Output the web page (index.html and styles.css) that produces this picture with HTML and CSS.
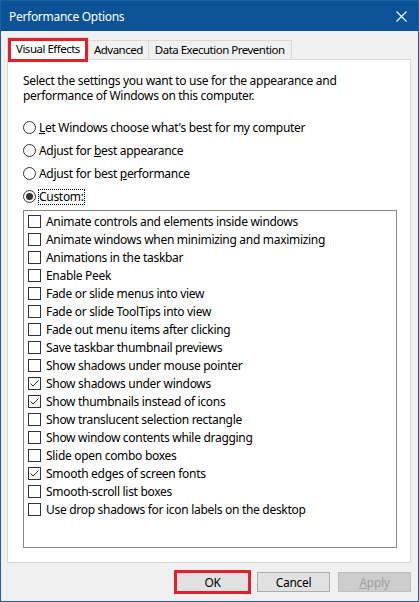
FILE: index.html
```html
<!DOCTYPE html>
<html lang="en">
<head>
    <meta charset="UTF-8">
    <meta name="viewport" content="width=device-width, initial-scale=1.0">
    <title>Performance Options</title>
    <link rel="stylesheet" href="styles.css">
</head>
<body>
    <div class="window">
        <div class="titlebar">
            <span class="title">Performance Options</span>
            <svg class="close" width="11" height="11" viewBox="0 0 11 11">
                <path d="M0.5 0.5 L10.5 10.5 M10.5 0.5 L0.5 10.5" stroke="#fff" stroke-width="1.1" fill="none"/>
            </svg>
        </div>

        <div class="content">
            <div class="tabs">
                <div class="tab active">Visual Effects</div>
                <div class="tab">Advanced</div>
                <div class="tab">Data Execution Prevention</div>
            </div>

            <div class="panel">
                <p class="intro">Select the settings you want to use for the appearance and<br>performance of Windows on this computer.</p>

                <div class="radios">
                    <div class="radio"><span class="dot"></span><span><u>L</u>et Windows choose what's best for my computer</span></div>
                    <div class="radio"><span class="dot"></span><span>Adjust for <u>b</u>est appearance</span></div>
                    <div class="radio"><span class="dot"></span><span>Adjust for best <u>p</u>erformance</span></div>
                    <div class="radio checked"><span class="dot"></span><span class="focus">Custom:</span></div>
                </div>

                <ul class="effects">
                    <li><span class="box"></span>Animate controls and elements inside windows</li>
                    <li><span class="box"></span>Animate windows when minimizing and maximizing</li>
                    <li><span class="box"></span>Animations in the taskbar</li>
                    <li><span class="box"></span>Enable Peek</li>
                    <li><span class="box"></span>Fade or slide menus into view</li>
                    <li><span class="box"></span>Fade or slide ToolTips into view</li>
                    <li><span class="box"></span>Fade out menu items after clicking</li>
                    <li><span class="box"></span>Save taskbar thumbnail previews</li>
                    <li><span class="box"></span>Show shadows under mouse pointer</li>
                    <li><span class="box"><svg viewBox="0 0 11 11"><path d="M1.5 5.5 L4 8 L9.5 2.5" stroke="#333" stroke-width="1" fill="none"/></svg></span>Show shadows under windows</li>
                    <li><span class="box"><svg viewBox="0 0 11 11"><path d="M1.5 5.5 L4 8 L9.5 2.5" stroke="#333" stroke-width="1" fill="none"/></svg></span>Show thumbnails instead of icons</li>
                    <li><span class="box"></span>Show translucent selection rectangle</li>
                    <li><span class="box"></span>Show window contents while dragging</li>
                    <li><span class="box"></span>Slide open combo boxes</li>
                    <li><span class="box"><svg viewBox="0 0 11 11"><path d="M1.5 5.5 L4 8 L9.5 2.5" stroke="#333" stroke-width="1" fill="none"/></svg></span>Smooth edges of screen fonts</li>
                    <li><span class="box"></span>Smooth-scroll list boxes</li>
                    <li><span class="box"></span>Use drop shadows for icon labels on the desktop</li>
                </ul>
            </div>

            <div class="buttons">
                <button class="btn default" type="button">OK</button>
                <button class="btn" type="button">Cancel</button>
                <button class="btn" type="button" disabled><u>A</u>pply</button>
            </div>
        </div>
    </div>
</body>
</html>
```

FILE: styles.css
```css
body {
    margin: 0;
    font-family: "Noto Sans", "Open Sans", sans-serif;
    font-size: 12px;
    letter-spacing: -0.3px;
    color: #000;
}
.window {
    width: 417px;
    height: 600px;
    border: 1px solid #1b5fa2;
    background: #f0f0f0;
    display: flex;
    flex-direction: column;
}
.titlebar {
    height: 30px;
    background: #0b5296;
    color: #fff;
    display: flex;
    align-items: center;
    justify-content: space-between;
    padding: 0 11px 0 8px;
}
.title {
    font-size: 12px;
}
.content {
    padding: 6px 7px 0 6px;
}
.tabs {
    display: flex;
    align-items: flex-end;
    height: 22px;
}
.tab {
    height: 18px;
    line-height: 18px;
    padding: 0 5px;
    font-size: 11.5px;
    letter-spacing: -0.5px;
    border: 1px solid #d9d9d9;
    border-bottom: none;
    margin-left: -1px;
    background: #f0f0f0;
}
.tab:last-child {
    padding: 0 6px;
}
.tab.active {
    height: 22px;
    line-height: 22px;
    margin-left: 0;
    padding: 0 8px;
    background: #fff;
    position: relative;
    z-index: 1;
    margin-bottom: -1px;
}
.tab.active::after {
    content: "";
    position: absolute;
    left: 0;
    top: 0;
    right: 0;
    bottom: -2px;
    border: 3px solid #e0202e;
}
.panel {
    background: #fff;
    border: 1px solid #d9d9d9;
    padding: 13px 13px 14px 15px;
}
.intro {
    margin: 0;
    line-height: 15px;
}
.radios {
    margin-top: 13px;
}
.radio {
    display: flex;
    align-items: center;
    height: 23px;
    gap: 3px;
}
.dot {
    width: 11px;
    height: 11px;
    border: 1px solid #333;
    border-radius: 50%;
    display: flex;
    align-items: center;
    justify-content: center;
}
.radio.checked .dot::after {
    content: "";
    width: 7px;
    height: 7px;
    border-radius: 50%;
    background: #333;
}
.focus {
    outline: 1px dotted #000;
    line-height: 14px;
}
.effects {
    list-style: none;
    margin: 2px 0 0;
    padding: 1px 0 0 4px;
    height: 335px;
    border: 1px solid #828790;
}
.effects li {
    display: flex;
    align-items: center;
    height: 18px;
    gap: 5px;
}
.box {
    width: 11px;
    height: 11px;
    border: 1px solid #333;
    display: flex;
}
.box svg {
    width: 11px;
    height: 11px;
}
.buttons {
    display: flex;
    justify-content: flex-end;
    gap: 8px;
    margin-top: 9px;
}
.btn {
    width: 73px;
    height: 20px;
    font-family: inherit;
    font-size: 12px;
    letter-spacing: -0.3px;
    color: #000;
    background: #e1e1e1;
    border: 1px solid #adadad;
    padding: 0;
}
.btn.default {
    outline: 3px solid #e0202e;
    outline-offset: -1px;
    border-color: #0078d7;
}
.btn:disabled {
    background: #cccccc;
    border-color: #bfbfbf;
    color: #a0a0a0;
}
```
